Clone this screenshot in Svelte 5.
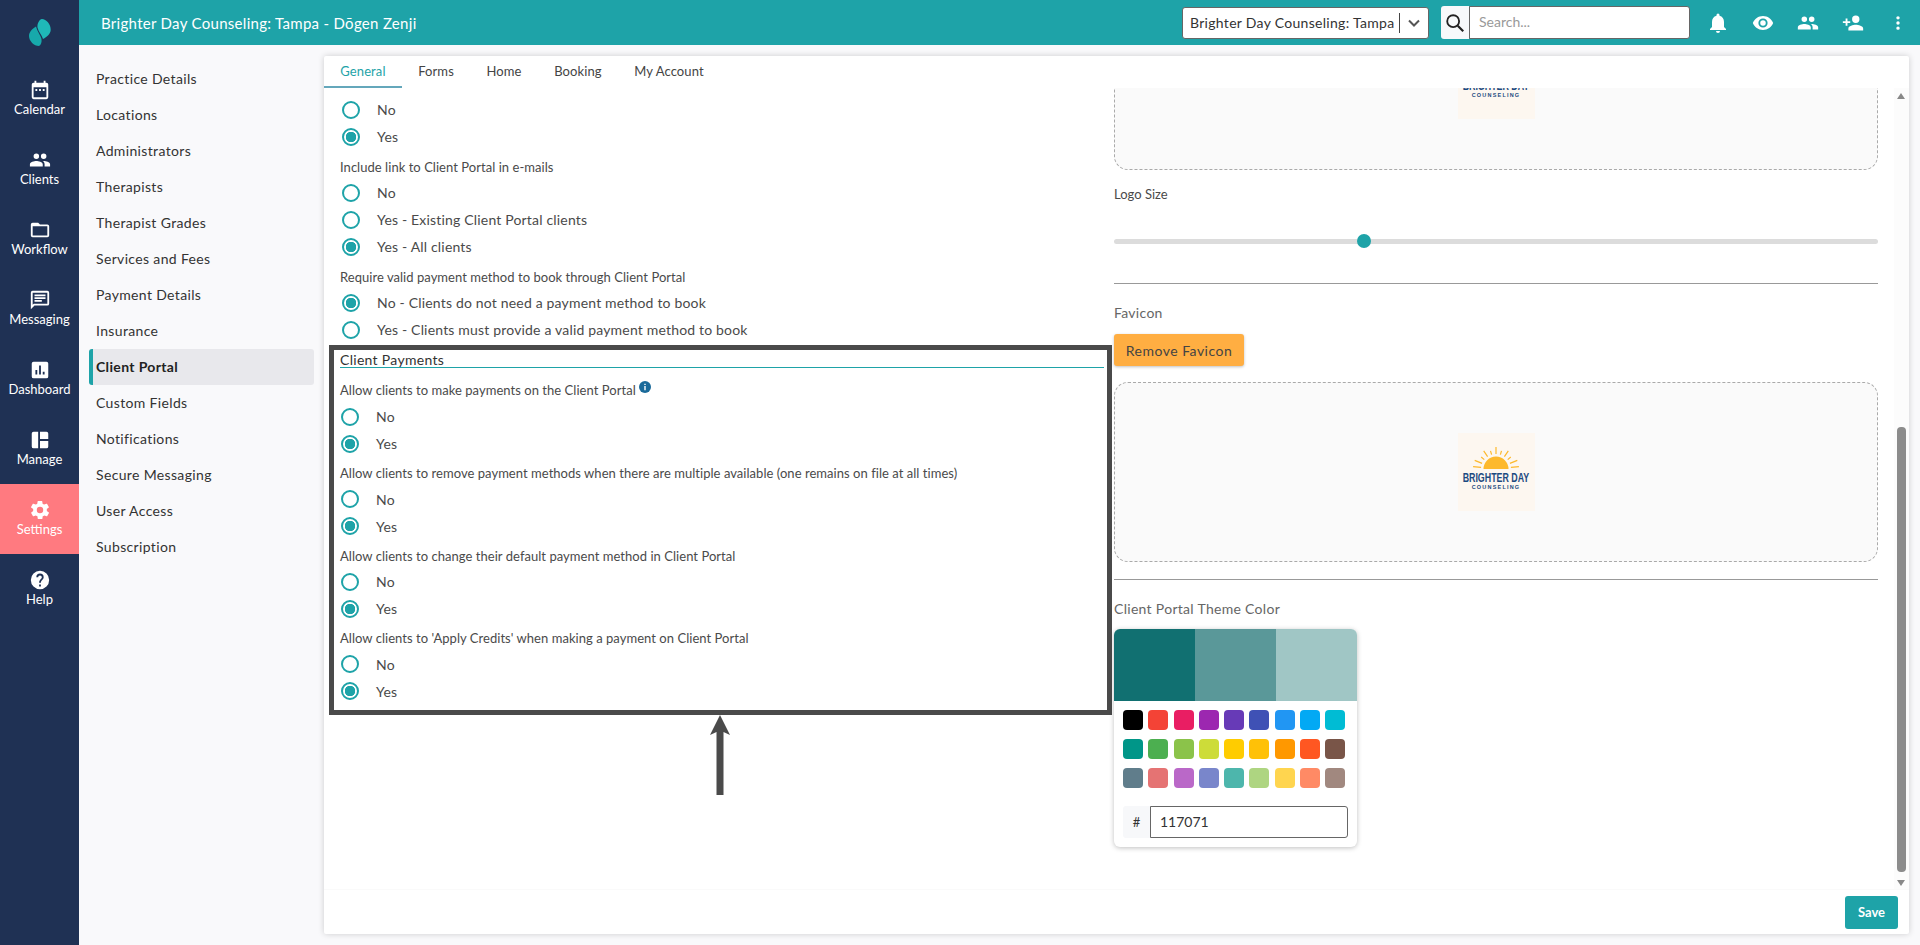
<script>
  const navItems = [
    { label: "Calendar", icon: "M19 4h-1V2h-2v2H8V2H6v2H5a2 2 0 0 0-2 2v14a2 2 0 0 0 2 2h14a2 2 0 0 0 2-2V6a2 2 0 0 0-2-2zm0 16H5V9h14v11zM7 11h2v2H7zm4 0h2v2h-2zm4 0h2v2h-2z" },
    { label: "Clients", icon: "M16 11a3 3 0 1 0 0-6 3 3 0 0 0 0 6zm-8 0a3 3 0 1 0 0-6 3 3 0 0 0 0 6zm0 2c-2.3 0-7 1.2-7 3.5V19h14v-2.500C15 14.200 10.300 13 8 13zm8 0h-1c1.200.8 2 2 2 3.500V19h6v-2.500c0-2.300-4.700-3.500-7-3.500z" },
    { label: "Workflow", icon: "M20 6h-8l-2-2H4a2 2 0 0 0-2 2v12a2 2 0 0 0 2 2h16a2 2 0 0 0 2-2V8a2 2 0 0 0-2-2zm0 12H4V8h16v10z" },
    { label: "Messaging", icon: "M20 2H4a2 2 0 0 0-2 2v18l4-4h14a2 2 0 0 0 2-2V4a2 2 0 0 0-2-2zm0 14H5.200L4 17.200V4h16v12zM6 12h8v2H6zm0-3h12v2H6zm0-3h12v2H6z" },
    { label: "Dashboard", icon: "M19 3H5a2 2 0 0 0-2 2v14a2 2 0 0 0 2 2h14a2 2 0 0 0 2-2V5a2 2 0 0 0-2-2zM9 17H7v-5h2v5zm4 0h-2V7h2v10zm4 0h-2v-3h2v3z" },
    { label: "Manage", icon: "M3 5a2 2 0 0 1 2-2h5v18H5a2 2 0 0 1-2-2V5zm9-2h7a2 2 0 0 1 2 2v6h-9V3zm0 10h9v6a2 2 0 0 1-2 2h-7v-8z" },
    { label: "Settings", active: true, icon: "M19.400 13c.04-.3.1-.6.1-1s-.06-.7-.1-1l2.100-1.600c.2-.15.25-.4.12-.6l-2-3.500c-.12-.2-.38-.3-.6-.2l-2.500 1a7.300 7.300 0 0 0-1.700-1l-.4-2.600a.5.5 0 0 0-.5-.4h-4a.5.5 0 0 0-.5.4l-.4 2.600c-.6.25-1.150.6-1.700 1l-2.500-1c-.22-.1-.48 0-.6.2l-2 3.500c-.13.2-.08.45.12.6L4.600 11c-.04.3-.1.65-.1 1s.06.7.1 1l-2.100 1.600c-.2.15-.25.4-.12.6l2 3.500c.12.2.38.3.6.2l2.500-1c.55.4 1.100.75 1.700 1l.4 2.600c.04.24.25.4.5.4h4c.25 0 .46-.16.5-.4l.4-2.600c.6-.25 1.150-.6 1.700-1l2.500 1c.22.1.48 0 .6-.2l2-3.500c.13-.2.08-.45-.12-.6L19.400 13zM12 15.500a3.500 3.500 0 1 1 0-7 3.500 3.500 0 0 1 0 7z" },
    { label: "Help", icon: "M12 2a10 10 0 1 0 0 20 10 10 0 0 0 0-20zm1 17h-2v-2h2v2zm2.100-7.700-.9.9c-.7.7-1.200 1.300-1.200 2.800h-2v-.5c0-1.100.5-2.100 1.200-2.800l1.200-1.300c.4-.3.6-.8.6-1.400a2 2 0 0 0-4 0H8a4 4 0 0 1 8 0c0 .9-.4 1.700-.9 2.300z" },
  ];

  const subNav = ["Practice Details", "Locations", "Administrators", "Therapists", "Therapist Grades", "Services and Fees", "Payment Details", "Insurance", "Client Portal", "Custom Fields", "Notifications", "Secure Messaging", "User Access", "Subscription"];
  const tabs = ["General", "Forms", "Home", "Booking", "My Account"];

  const payments = [
    { q: "Allow clients to make payments on the Client Portal", info: true },
    { q: "Allow clients to remove payment methods when there are multiple available (one remains on file at all times)" },
    { q: "Allow clients to change their default payment method in Client Portal" },
    { q: "Allow clients to 'Apply Credits' when making a payment on Client Portal" },
  ];

  const swatches = ["#000000", "#f44336", "#e91e63", "#9c27b0", "#673ab7", "#3f51b5", "#2196f3", "#03a9f4", "#00bcd4", "#009688", "#4caf50", "#8bc34a", "#cddc39", "#ffcc00", "#ffc107", "#ff9800", "#ff5722", "#795548", "#607d8b", "#e57373", "#ba68c8", "#7986cb", "#4db6ac", "#aed581", "#ffd54f", "#ff8a65", "#a1887f"];
</script>

{#snippet radio(label, checked)}
  <div class="radio">
    <span class="dot" class:checked></span>
    <span>{label}</span>
  </div>
{/snippet}

{#snippet brandLogo()}
  <div class="brand">
    <svg viewBox="0 0 48 22" width="48" height="22">
      <path d="M11.500 22a12.500 12.500 0 0 1 25 0z" fill="#fdb92d" />
      <path stroke="#fdb92d" stroke-width="1.200" d="M24 7V0M28.400 7.700 29.500 3.800M19.600 7.700 18.500 3.800M32.400 9.600 36.300 3.800M15.600 9.600 11.700 3.800M35.700 12.600 38.800 10M12.300 12.600 9.200 10M37.900 16.400 45.300 13.400M10.100 16.400 2.700 13.400M38.900 20.400 46.900 19.600M9.100 20.400 1.100 19.600" />
    </svg>
    <div class="brand-name">BRIGHTER DAY</div>
    <div class="brand-sub">COUNSELING</div>
  </div>
{/snippet}

<div class="app">
  <aside class="rail">
    <div class="rail-logo">
      <svg viewBox="0 0 22 27" width="22" height="27">
        <path d="M13 0C17 0 22 5 21.700 11 21.500 15 18 18 14 20 13 16 9.500 13 8.500 8.500 8 5 10 .5 13 0z" fill="#1fb8b8" />
        <path d="M7 7.500C3 10 0 13 0 17 0 22 5 27 10 27 12 26 13 23 12.500 20 11.500 16 8 12 7 7.500z" fill="#17a9ab" />
      </svg>
    </div>
    {#each navItems as item}
      <div class="rail-item" class:active={item.active}>
        <svg viewBox="0 0 24 24" width="22" height="22"><path d={item.icon} fill="#fff" /></svg>
        <span>{item.label}</span>
      </div>
    {/each}
  </aside>

  <div class="main">
    <header class="topbar">
      <div class="title">Brighter Day Counseling: Tampa - Dōgen Zenji</div>
      <div class="select">
        <span class="select-text">Brighter Day Counseling: Tampa</span>
        <span class="select-sep"></span>
        <svg viewBox="0 0 24 24" width="20" height="20"><path d="M6 9l6 6 6-6" fill="none" stroke="#555" stroke-width="2.400" /></svg>
      </div>
      <div class="search">
        <span class="search-icon">
          <svg viewBox="0 0 24 24" width="22" height="22"><circle cx="10" cy="10" r="6.500" fill="none" stroke="#222" stroke-width="2" /><path d="M15 15l6 6" stroke="#222" stroke-width="2.400" /></svg>
        </span>
        <span class="search-input">Search...</span>
      </div>
      <div class="top-icons">
        <svg viewBox="0 0 24 24" width="24" height="24"><path d="M12 22a2 2 0 0 0 2-2h-4a2 2 0 0 0 2 2zm6-6v-5c0-3.100-1.600-5.600-4.500-6.300V4a1.500 1.500 0 0 0-3 0v.7C7.600 5.400 6 7.900 6 11v5l-2 2v1h16v-1l-2-2z" fill="#fff" /></svg>
        <svg viewBox="-1 -1 26 26" width="24" height="24"><path fill-rule="evenodd" d="M12 4.500C7 4.500 2.700 7.600 1 12c1.700 4.400 6 7.500 11 7.500s9.300-3.100 11-7.500c-1.700-4.400-6-7.500-11-7.500zM12 17a5 5 0 1 1 0-10 5 5 0 0 1 0 10zm0-8a3 3 0 1 0 0 6 3 3 0 0 0 0-6z" fill="#fff" /></svg>
        <svg viewBox="-1 -1 26 26" width="24" height="24"><path d={navItems[1].icon} fill="#fff" /></svg>
        <svg viewBox="-1 -1 26 26" width="24" height="24"><path d="M15 12a4 4 0 1 0 0-8 4 4 0 0 0 0 8zm-9-2V7H4v3H1v2h3v3h2v-3h3v-2H6zm9 4c-2.700 0-8 1.300-8 4v2h16v-2c0-2.700-5.300-4-8-4z" fill="#fff" /></svg>
        <svg viewBox="-2 -2 28 28" width="24" height="24"><path d="M12 8a2 2 0 1 0 0-4 2 2 0 0 0 0 4zm0 2a2 2 0 1 0 0 4 2 2 0 0 0 0-4zm0 6a2 2 0 1 0 0 4 2 2 0 0 0 0-4z" fill="#fff" /></svg>
      </div>
    </header>

    <div class="body">
      <nav class="subnav">
        {#each subNav as name}
          <div class="subnav-item" class:current={name === "Client Portal"}>{name}</div>
        {/each}
      </nav>

      <section class="card">
        <div class="tabs">
          {#each tabs as tab, i}
            <div class="tab" class:selected={i === 0}>{tab}</div>
          {/each}
        </div>

        <div class="scroll">
          <div class="columns">
            <div class="left">
              {@render radio("No", false)}
              {@render radio("Yes", true)}
              <div class="question">Include link to Client Portal in e-mails</div>
              {@render radio("No", false)}
              {@render radio("Yes - Existing Client Portal clients", false)}
              {@render radio("Yes - All clients", true)}
              <div class="question">Require valid payment method to book through Client Portal</div>
              {@render radio("No - Clients do not need a payment method to book", true)}
              {@render radio("Yes - Clients must provide a valid payment method to book", false)}

              <div class="highlight">
                <div class="section-title">Client Payments</div>
                {#each payments as p}
                  <div class="question" class:tall={p.info}>
                    {p.q}
                    {#if p.info}
                      <svg class="info" viewBox="0 0 12 12" width="12" height="12"><circle cx="6" cy="6" r="6" fill="#1a6a9a" /><path d="M5.300 5h1.400v4.200H5.300zM5.300 2.700h1.400V4H5.300z" fill="#fff" /></svg>
                    {/if}
                  </div>
                  {@render radio("No", false)}
                  {@render radio("Yes", true)}
                {/each}
              </div>

              <div class="arrow">
                <svg viewBox="0 0 22 80" width="22" height="80"><path d="M11 0 21 20 14.500 17V80H7.500V17L1 20z" fill="#4a4a4a" /></svg>
              </div>
            </div>

            <div class="right">
              <div class="dropzone first">{@render brandLogo()}</div>
              <div class="field-label small">Logo Size</div>
              <div class="slider"><span class="thumb"></span></div>
              <hr class="rule-one" />
              <div class="field-label">Favicon</div>
              <button class="remove">Remove Favicon</button>
              <div class="dropzone">{@render brandLogo()}</div>
              <hr class="rule-two" />
              <div class="field-label theme">Client Portal Theme Color</div>
              <div class="picker">
                <div class="shades">
                  <span style="background:#117071"></span>
                  <span style="background:#5a9899"></span>
                  <span style="background:#a0c6c5"></span>
                </div>
                <div class="swatches">
                  {#each swatches as c}
                    <span style="background:{c}"></span>
                  {/each}
                </div>
                <div class="hex">
                  <span class="hash">#</span>
                  <span class="hex-input">117071</span>
                </div>
              </div>
            </div>
          </div>

          <div class="scrollbar">
            <span class="up"></span>
            <span class="thumb-bar"></span>
            <span class="down"></span>
          </div>
        </div>

        <div class="footer"><button class="save">Save</button></div>
      </section>
    </div>
  </div>
</div>

<style>
  :global(body) {
    margin: 0;
    font-family: Lato, "Open Sans", sans-serif;
    color: #333;
  }
  .app {
    display: flex;
    height: 945px;
    overflow: hidden;
  }
  .rail {
    width: 79px;
    flex-shrink: 0;
    background: #1f3154;
    color: #fff;
  }
  .rail-logo {
    height: 64px;
    display: flex;
    align-items: center;
    justify-content: center;
  }
  .rail-item {
    height: 70px;
    box-sizing: border-box;
    padding-bottom: 2px;
    display: flex;
    flex-direction: column;
    align-items: center;
    justify-content: center;
    font-size: 13px;
    line-height: 16px;
  }
  .rail-item.active {
    background: #ff7a80;
  }
  .main {
    flex: 1;
    display: flex;
    flex-direction: column;
    min-width: 0;
  }
  .topbar {
    height: 45px;
    background: #1ea3a8;
    color: #fff;
    display: flex;
    align-items: center;
    padding-left: 22px;
    flex-shrink: 0;
  }
  .title {
    font-size: 15px;
    letter-spacing: 0.3px;
    width: 1081px;
  }
  .select {
    width: 247px;
    height: 32px;
    box-sizing: border-box;
    background: #fff;
    border: 1px solid #666;
    border-radius: 3px;
    display: flex;
    align-items: center;
    padding-left: 7px;
    color: #333;
    font-size: 14px;
    letter-spacing: 0.3px;
  }
  .select-text {
    width: 209px;
    white-space: nowrap;
  }
  .select-sep {
    width: 1px;
    height: 20px;
    background: #444;
    margin-right: 4px;
  }
  .search {
    display: flex;
    margin-left: 12px;
    height: 33px;
  }
  .search-icon {
    width: 28px;
    background: #f7f9fb;
    border-radius: 3px 0 0 3px;
    display: flex;
    align-items: center;
    justify-content: center;
  }
  .search-input {
    width: 221px;
    box-sizing: border-box;
    background: #fff;
    border: 1px solid #666;
    border-radius: 0 3px 3px 0;
    padding: 6px 9px;
    font-size: 14px;
    color: #999;
  }
  .top-icons {
    display: flex;
    align-items: center;
    gap: 21px;
    margin-left: 16px;
  }
  .body {
    flex: 1;
    display: flex;
    min-height: 0;
    background: #f9f9fb;
  }
  .subnav {
    width: 245px;
    flex-shrink: 0;
    padding: 16px 10px 0;
    box-sizing: border-box;
  }
  .subnav-item {
    height: 36px;
    line-height: 35px;
    padding-left: 7px;
    font-size: 14px;
    letter-spacing: 0.35px;
    color: #333;
  }
  .subnav-item.current {
    background: #e8e8ec;
    border-left: 4px solid #1ea3a8;
    padding-left: 3px;
    border-radius: 3px;
    font-weight: 700;
    color: #222;
  }
  .card {
    width: 1585px;
    margin-top: 11px;
    margin-bottom: 11px;
    background: #fff;
    box-shadow: 0 0 6px rgba(0, 0, 0, 0.18);
    border-radius: 2px;
    display: flex;
    flex-direction: column;
    min-height: 0;
  }
  .tabs {
    display: flex;
    height: 32px;
    flex-shrink: 0;
  }
  .tab {
    padding: 0 16.300px;
    font-size: 13px;
    letter-spacing: 0.1px;
    line-height: 31px;
    height: 32px;
    box-sizing: border-box;
    color: #444;
  }
  .tab.selected {
    color: #1ea3a8;
    border-bottom: 2px solid #64a7bb;
  }
  .scroll {
    position: relative;
    flex: 1;
    overflow: hidden;
  }
  .columns {
    display: flex;
  }
  .left {
    width: 790px;
    padding-top: 8px;
    flex-shrink: 0;
  }
  .radio {
    height: 27px;
    display: flex;
    align-items: center;
    padding-left: 18px;
    font-size: 14px;
    letter-spacing: 0.18px;
    color: #4a4a4a;
  }
  .dot {
    width: 18px;
    height: 18px;
    box-sizing: border-box;
    border: 2px solid #1ea3a8;
    border-radius: 50%;
    margin-right: 17px;
    flex-shrink: 0;
  }
  .dot.checked {
    background: radial-gradient(circle, #1ea3a8 0 5px, #fff 5.500px);
  }
  .question {
    height: 25px;
    margin-top: 4px;
    margin-left: 16px;
    display: flex;
    align-items: center;
    gap: 3px;
    font-size: 13px;
    letter-spacing: 0.04px;
    color: #4a4a4a;
    white-space: nowrap;
  }
  .info {
    margin-bottom: 6px;
  }
  .highlight {
    margin: 2px 0 0 5px;
    width: 783px;
    height: 370px;
    box-sizing: border-box;
    border: 5px solid #4a4a4a;
  }
  .highlight .question {
    margin-left: 6px;
    height: 24.500px;
  }
  .highlight .question.tall {
    height: 27px;
  }
  .highlight .radio {
    padding-left: 7px;
  }
  .section-title {
    margin: 0 3px 8px 6px;
    height: 17px;
    line-height: 19px;
    font-size: 14px;
    letter-spacing: 0.3px;
    border-bottom: 1px solid #1ea3a8;
  }
  .arrow {
    margin: 0 0 0 385px;
    height: 80px;
  }
  .arrow svg {
    display: block;
  }
  .right {
    width: 764px;
  }
  .dropzone {
    height: 180px;
    box-sizing: border-box;
    background: #fafafa;
    border: 1px dashed #aaa;
    border-radius: 14px;
    display: flex;
    align-items: center;
    justify-content: center;
  }
  .dropzone.first {
    margin-top: -98px;
  }
  .brand {
    width: 77px;
    height: 78px;
    background: #fdf7f0;
    display: flex;
    flex-direction: column;
    align-items: center;
    padding-top: 14px;
    box-sizing: border-box;
  }
  .brand svg {
    display: block;
    flex-shrink: 0;
  }
  .brand-name {
    font-family: "Liberation Sans", sans-serif;
    font-weight: 700;
    font-size: 13px;
    line-height: 12px;
    margin-top: 3px;
    white-space: nowrap;
    transform: scaleX(0.68);
    color: #1c4a80;
  }
  .brand-sub {
    font-family: "Liberation Sans", sans-serif;
    font-weight: 700;
    font-size: 5.500px;
    line-height: 6px;
    letter-spacing: 1.200px;
    white-space: nowrap;
    color: #1c4a80;
  }
  .field-label {
    font-size: 14px;
    color: #666;
    letter-spacing: 0.3px;
    margin-top: 20px;
    line-height: 18px;
  }
  .field-label.small {
    font-size: 13px;
    letter-spacing: 0;
    color: #4a4a4a;
    margin-top: 15px;
  }
  .slider {
    height: 5px;
    background: #dcdcdc;
    border-radius: 3px;
    margin-top: 36px;
    position: relative;
  }
  .thumb {
    position: absolute;
    left: 243px;
    top: -5px;
    width: 14px;
    height: 14px;
    border-radius: 50%;
    background: #1ea3a8;
  }
  hr {
    border: 0;
    border-top: 1px solid #999;
    margin: 0;
  }
  .rule-one {
    margin-top: 39px;
  }
  .rule-two {
    margin-top: 17px;
  }
  .remove {
    display: block;
    margin-top: 12px;
    width: 130px;
    height: 32px;
    border: 0;
    border-radius: 3px;
    background: #ffae42;
    box-shadow: 0 1px 3px rgba(0, 0, 0, 0.25);
    font-family: inherit;
    font-size: 14px;
    letter-spacing: 0.5px;
    color: #444;
    margin-bottom: 16px;
  }
  .field-label.theme {
    margin-top: 20px;
  }
  .picker {
    width: 243px;
    margin-top: 11px;
    border-radius: 6px;
    background: #fff;
    box-shadow: 0 1px 5px rgba(0, 0, 0, 0.25);
    padding-bottom: 9px;
  }
  .shades {
    display: flex;
    height: 72px;
    border-radius: 6px 6px 0 0;
    overflow: hidden;
  }
  .shades span {
    flex: 1;
  }
  .swatches {
    display: grid;
    grid-template-columns: repeat(9, 20px);
    justify-content: space-between;
    row-gap: 9px;
    padding: 9px 12px 0 9px;
  }
  .swatches span {
    height: 20px;
    border-radius: 4px;
  }
  .hex {
    display: flex;
    margin: 18px 9px 0;
    height: 32px;
  }
  .hash {
    width: 27px;
    background: #f7f8fa;
    border-radius: 3px 0 0 3px;
    text-align: center;
    line-height: 32px;
    font-size: 13px;
  }
  .hex-input {
    flex: 1;
    box-sizing: border-box;
    border: 1px solid #666;
    border-radius: 0 3px 3px 0;
    padding-left: 9px;
    line-height: 30px;
    font-size: 14px;
  }
  .scrollbar {
    position: absolute;
    right: 0;
    top: 0;
    bottom: 0;
    width: 15px;
    background: #fcfcfc;
  }
  .up, .down {
    position: absolute;
    left: 3px;
    width: 0;
    height: 0;
    border-left: 4.500px solid transparent;
    border-right: 4.500px solid transparent;
  }
  .up {
    top: 5px;
    border-bottom: 6px solid #888;
  }
  .down {
    bottom: 3px;
    border-top: 6px solid #888;
  }
  .thumb-bar {
    position: absolute;
    left: 3px;
    top: 339px;
    width: 9px;
    height: 445px;
    border-radius: 4px;
    background: #8c8c8c;
  }
  .footer {
    height: 44px;
    flex-shrink: 0;
    display: flex;
    justify-content: flex-end;
    align-items: center;
    padding-right: 11px;
    border-top: 1px solid #fafafa;
  }
  .save {
    width: 53px;
    height: 33px;
    border: 0;
    border-radius: 3px;
    background: #1ea3a8;
    color: #fff;
    font-family: inherit;
    font-size: 13px;
    font-weight: 700;
  }
</style>
